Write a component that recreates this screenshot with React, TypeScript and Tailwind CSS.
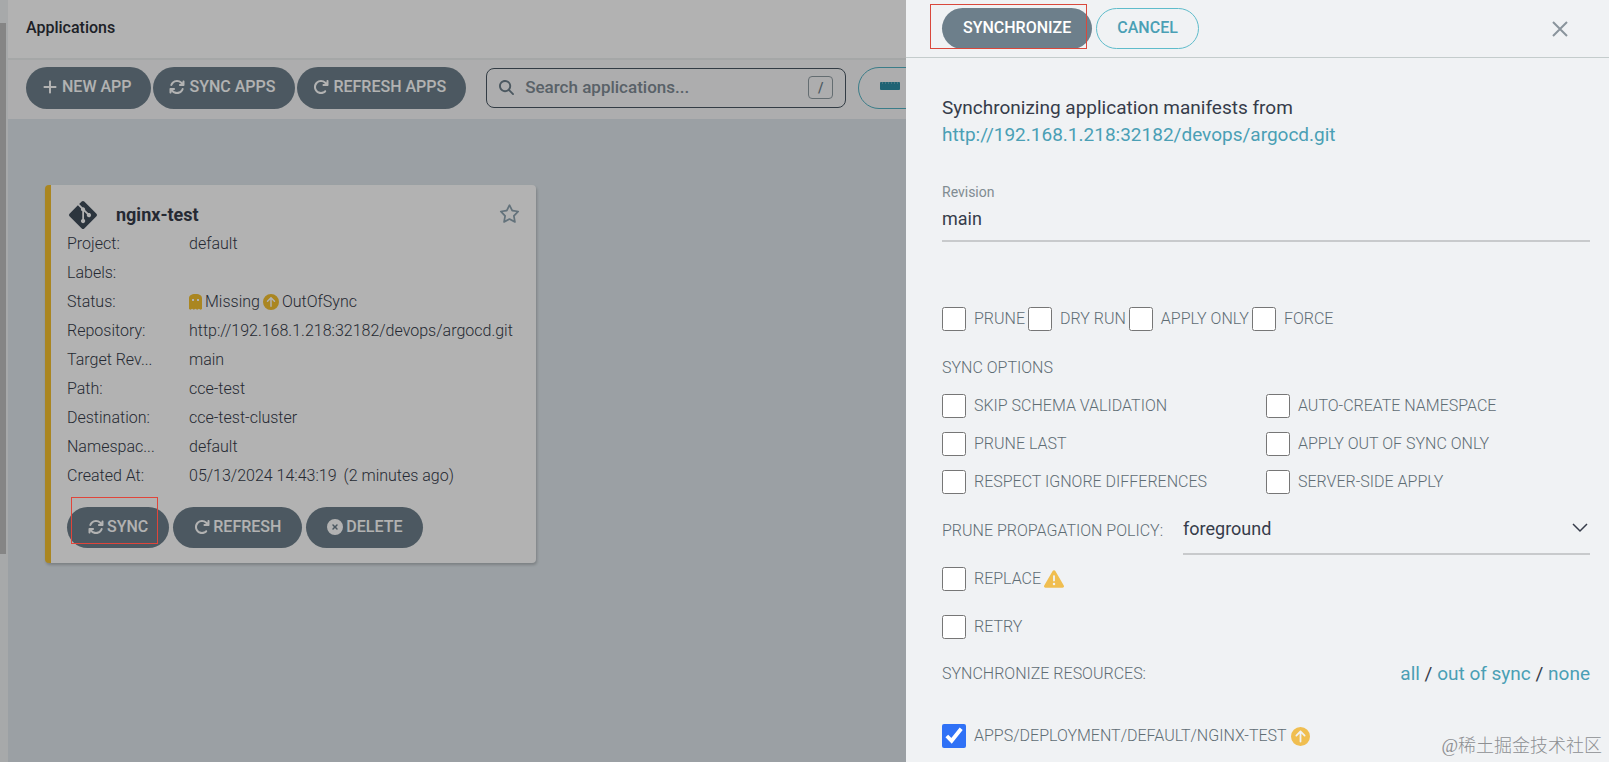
import type { ReactNode } from 'react';
import {
  FaArrowRotateRight,
  FaArrowsRotate,
  FaCircleArrowUp,
  FaCircleXmark,
  FaGitAlt,
  FaMagnifyingGlass,
  FaPlus,
  FaRegStar,
  FaTriangleExclamation,
} from 'react-icons/fa6';

const REPO_URL = 'http://192.168.1.218:32182/devops/argocd.git';

const syncOptions = [
  'Skip schema validation',
  'Auto-create namespace',
  'Prune last',
  'Apply out of sync only',
  'Respect ignore differences',
  'Server-side apply',
];

function Ghost() {
  return (
    <svg width="13" height="16" viewBox="0 0 13 16" fill="#f4c030">
      <path
        fillRule="evenodd"
        d="M0 4.500C0 1.500 2 0 6.500 0S13 1.500 13 4.500V15l-1.500.8-1.600-1-1.700 1-1.700-1-1.700 1-1.700-1-1.600 1L0 15ZM3 5v2h2V5Zm5 0v2h2V5Z"
      />
    </svg>
  );
}

function Ruler() {
  return (
    <svg width="20" height="9" viewBox="0 0 20 9">
      <rect y="1" width="20" height="8" rx="1" fill="#2f8fa6" />
      <path d="M2 2h16" stroke="#9cc5d0" strokeWidth="1" strokeDasharray="1 2" />
    </svg>
  );
}

function ToolbarButton({ children }: { children: ReactNode }) {
  return (
    <button className="h-[42px] pl-4 pr-5 pb-0.5 rounded-full bg-[#6d7f8b] text-white font-medium uppercase flex items-center gap-1 whitespace-nowrap">
      {children}
    </button>
  );
}

function PillButton({ children }: { children: ReactNode }) {
  return (
    <button className="h-[41px] px-[21px] pb-0.5 rounded-full bg-[#6d7f8b] text-white font-medium uppercase flex items-center gap-[3px] whitespace-nowrap">
      {children}
    </button>
  );
}

function Check({ label, checked, children }: { label: string; checked?: boolean; children?: ReactNode }) {
  return (
    <label className="flex items-center text-[#5f6d74] uppercase whitespace-nowrap">
      <input type="checkbox" defaultChecked={checked} className="w-6 h-6 mr-2 shrink-0 accent-[#2f71f6]" />
      {label}
      {children}
    </label>
  );
}

function Row({ name, children }: { name: string; children?: ReactNode }) {
  return (
    <div className="flex h-[29px] items-center">
      <dt className="w-[122px] whitespace-nowrap">{name}</dt>
      <dd className="flex items-center gap-[3px] whitespace-nowrap">{children}</dd>
    </div>
  );
}

function AppCard() {
  return (
    <article className="w-[491px] rounded border-l-[6px] border-[#f4c030] bg-white px-4 pt-4 pb-[15px] shadow-[1px_2px_3px_rgba(0,0,0,0.2)]">
      <div className="flex items-center h-7">
        <FaGitAlt size={32} className="text-[#3f4c5a]" />
        <h2 className="ml-[17px] text-lg font-bold text-[#363c4a]">nginx-test</h2>
        <button aria-label="Add to favorites" className="ml-auto mb-1 text-[#8fa4b1]">
          <FaRegStar size={21} />
        </button>
      </div>
      <dl className="font-light text-[#363c4a]">
        <Row name="Project:">default</Row>
        <Row name="Labels:" />
        <Row name="Status:">
          <Ghost />
          Missing
          <FaCircleArrowUp size={16} className="text-[#f4c030]" />
          OutOfSync
        </Row>
        <Row name="Repository:">{REPO_URL}</Row>
        <Row name="Target Rev...">main</Row>
        <Row name="Path:">cce-test</Row>
        <Row name="Destination:">cce-test-cluster</Row>
        <Row name="Namespac...">default</Row>
        <Row name="Created At:">
          <span>05/13/2024 14:43:19</span>
          <span className="ml-1">(2 minutes ago)</span>
        </Row>
      </dl>
      <div className="mt-[17px] flex gap-1">
        <div className="relative">
          <PillButton>
            <FaArrowsRotate size={16} />
            Sync
          </PillButton>
          <div className="absolute z-20 left-1 -top-2.5 w-[87px] h-[47px] border border-[#e0453a] pointer-events-none" />
        </div>
        <PillButton>
          <FaArrowRotateRight size={16} />
          Refresh
        </PillButton>
        <PillButton>
          <FaCircleXmark size={16} />
          Delete
        </PillButton>
      </div>
    </article>
  );
}

function SyncPanel() {
  return (
    <aside className="relative w-[703px] max-w-full shrink-0 bg-[#f0f2f4] text-[#363c4a]">
      <header className="h-[58px] border-b border-[#c4cccc] pl-9 pr-10 flex items-center gap-1">
        <div className="relative">
          <PillButton>Synchronize</PillButton>
          <div className="absolute -left-3 -top-1 w-[157px] h-[45px] border border-[#d9483c] pointer-events-none" />
        </div>
        <button className="h-[41px] px-5 pb-0.5 rounded-full border border-[#5fbccb] text-[#4a9fb5] font-medium uppercase">
          Cancel
        </button>
        <button aria-label="Close" className="ml-auto text-[#8a949c]">
          <svg width="18" height="18" viewBox="0 0 18 18" fill="none" stroke="currentColor" strokeWidth="2">
            <path d="M2 2l14 14M16 2L2 16" />
          </svg>
        </button>
      </header>

      <form className="pl-9 pr-[19px] pt-9">
        <p className="text-[19px] leading-[27px]">
          Synchronizing application manifests from
          <br />
          <a href={REPO_URL} className="text-[#4a9fb5]">{REPO_URL}</a>
        </p>

        <div className="mt-[34px] flex flex-col">
          <label htmlFor="revision" className="text-sm leading-5 text-[#808c92]">Revision</label>
          <input id="revision" defaultValue="main" className="h-10 pb-1.5 text-lg bg-transparent border-b-2 border-[#c8cacc] outline-none" />
        </div>

        <div className="mt-[65px] flex gap-[3px] font-light">
          <Check label="Prune" />
          <Check label="Dry run" />
          <Check label="Apply only" />
          <Check label="Force" />
        </div>

        <h3 className="mt-[25px] text-[#5f6d74] uppercase font-light">Sync options</h3>
        <div className="mt-3.5 grid grid-cols-2 gap-y-3.5 font-light">
          {syncOptions.map((o) => (
            <Check key={o} label={o} />
          ))}
        </div>

        <div className="mt-3 flex items-center">
          <label htmlFor="policy" className="mr-5 text-[#5f6d74] uppercase font-light">Prune propagation policy:</label>
          <div className="relative flex-1">
            <select id="policy" className="appearance-none w-full h-[49px] pb-0.5 text-lg bg-transparent border-b-2 border-[#c8cacc] outline-none">
              <option>foreground</option>
              <option>background</option>
              <option>orphan</option>
            </select>
            <svg className="absolute right-0.5 top-4 pointer-events-none" width="16" height="12" viewBox="0 0 16 12" fill="none" stroke="#363c4a" strokeWidth="1.5">
              <path d="M1 2l7 7 7-7" />
            </svg>
          </div>
        </div>

        <div className="mt-3 flex flex-col gap-6 font-light">
          <Check label="Replace">
            <FaTriangleExclamation size={20} className="ml-[3px] text-[#f0be50]" />
          </Check>
          <Check label="Retry" />
        </div>

        <div className="mt-[21px] flex items-center">
          <span className="text-[#5f6d74] uppercase font-light">Synchronize resources:</span>
          <div className="ml-auto text-[19px] leading-7">
            <a href="#all" className="text-[#4a9fb5]">all</a> / <a href="#out-of-sync" className="text-[#4a9fb5]">out of sync</a> /{' '}
            <a href="#none" className="text-[#4a9fb5]">none</a>
          </div>
        </div>

        <div className="mt-9 font-light">
          <Check label="apps/deployment/default/nginx-test" checked>
            <FaCircleArrowUp size={19} className="ml-1 text-[#f0be50]" />
          </Check>
        </div>
      </form>

      <span className="absolute right-[7px] bottom-0.5 text-lg font-light text-[#8d8f92] font-['Liberation_Serif','Noto_Sans_CJK_SC',serif]">
        @稀土掘金技术社区
      </span>
    </aside>
  );
}

export default function App() {
  return (
    <div className="flex min-h-screen overflow-hidden bg-[#dee6eb] font-[Roboto,sans-serif] text-base">
      <div className="relative flex flex-1 min-w-0 overflow-hidden">
        <div className="w-2 shrink-0 bg-[#f0f2f4] pt-[23px]">
          <div className="w-1.5 h-[531px] bg-[#bfbfbf]" />
        </div>
        <main className="flex-1 min-w-0">
          <header className="h-[60px] px-[18px] pb-0.5 flex items-center bg-white border-b-2 border-[#eceff0]">
            <h1 className="font-medium text-[#2b2f38]">Applications</h1>
          </header>
          <div className="h-[59px] pl-[18px] pb-1 flex items-center gap-0.5 bg-[#f8f8f9]">
            <ToolbarButton>
              <FaPlus size={16} />
              New app
            </ToolbarButton>
            <ToolbarButton>
              <FaArrowsRotate size={16} />
              Sync apps
            </ToolbarButton>
            <ToolbarButton>
              <FaArrowRotateRight size={16} />
              Refresh apps
            </ToolbarButton>
            <div className="ml-[18px] w-[360px] h-10 shrink-0 rounded-lg border border-[#495763] px-3 flex items-center">
              <FaMagnifyingGlass size={15} className="text-[#6d7f8b]" />
              <input
                aria-label="Search applications"
                placeholder="Search applications..."
                className="ml-[11px] flex-1 min-w-0 text-[17px] font-medium placeholder:text-[#808c95] bg-transparent outline-none"
              />
              <kbd className="w-[25px] h-[23px] rounded border border-[#909ca3] text-[#6d7f8b] font-[Roboto] font-medium text-sm flex items-center justify-center">/</kbd>
            </div>
            <button aria-label="Options" className="ml-2.5 w-[86px] h-[42px] shrink-0 rounded-full border border-[#55b3c4] pl-[21px] pb-1">
              <Ruler />
            </button>
          </div>
          <section className="pl-[37px] pt-[66px]">
            <AppCard />
          </section>
        </main>
        <div className="absolute inset-0 z-10 bg-black/30" />
      </div>
      <SyncPanel />
    </div>
  );
}
